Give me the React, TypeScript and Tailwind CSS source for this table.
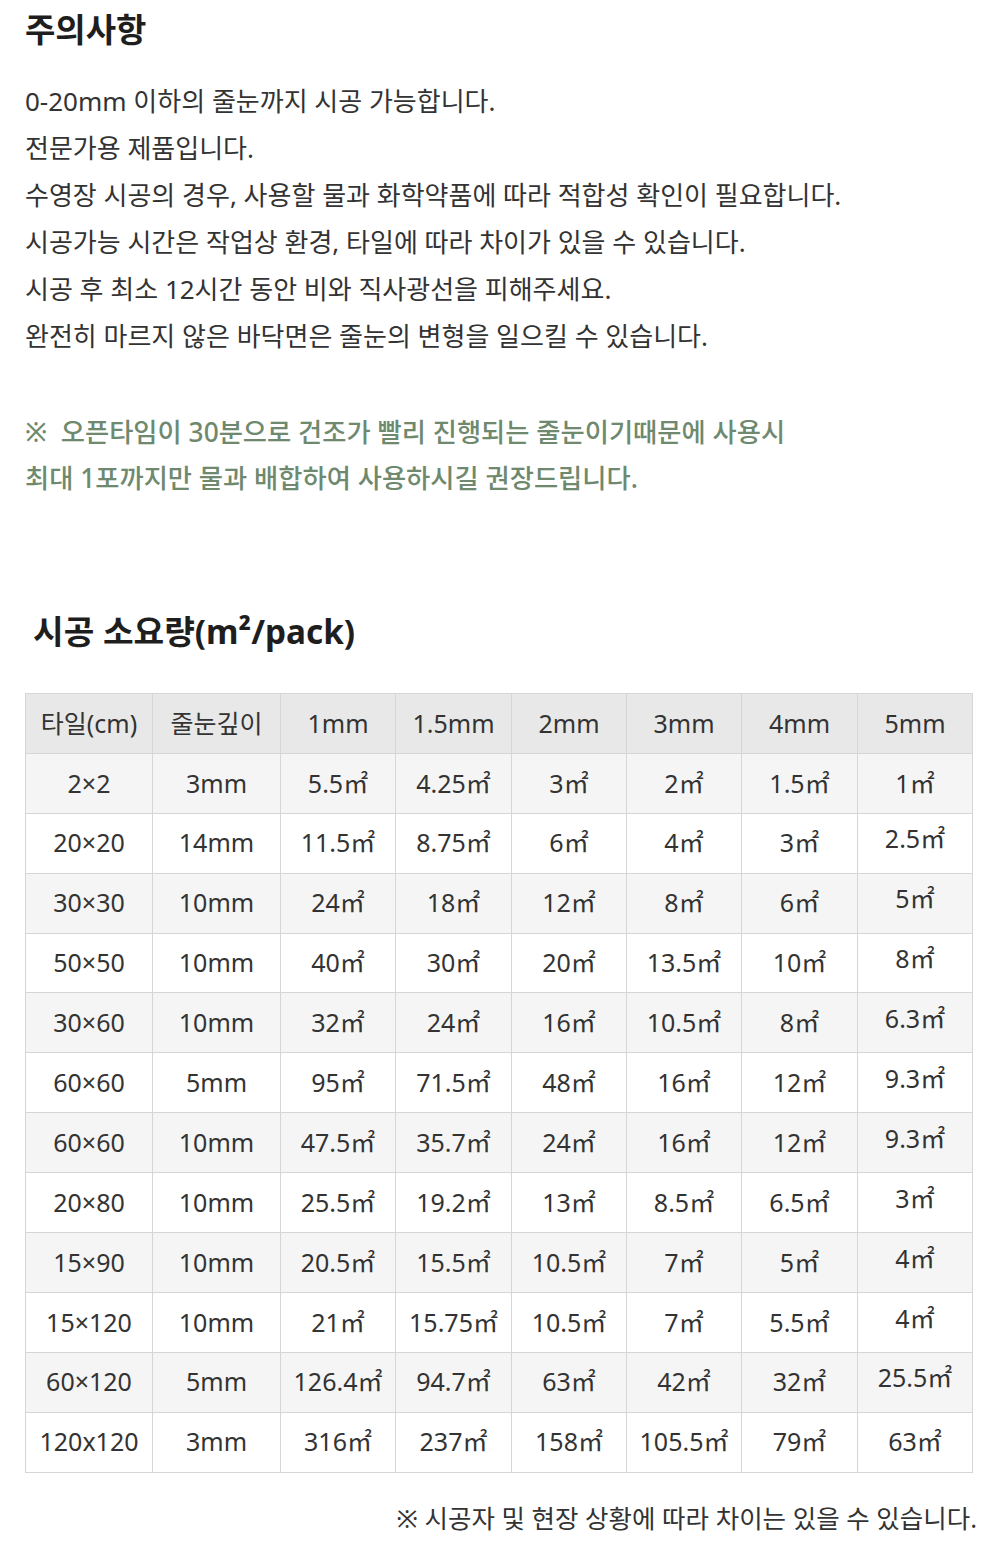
import React from "react";

const font = { fontFamily: '"Noto Sans", "Noto Sans CJK KR", sans-serif' };

const header = ["타일(cm)", "줄눈깊이", "1mm", "1.5mm", "2mm", "3mm", "4mm", "5mm"];
const rows: string[][] = [
  ["2×2", "3mm", "5.5㎡", "4.25㎡", "3㎡", "2㎡", "1.5㎡", "1㎡"],
  ["20×20", "14mm", "11.5㎡", "8.75㎡", "6㎡", "4㎡", "3㎡", "2.5㎡"],
  ["30×30", "10mm", "24㎡", "18㎡", "12㎡", "8㎡", "6㎡", "5㎡"],
  ["50×50", "10mm", "40㎡", "30㎡", "20㎡", "13.5㎡", "10㎡", "8㎡"],
  ["30×60", "10mm", "32㎡", "24㎡", "16㎡", "10.5㎡", "8㎡", "6.3㎡"],
  ["60×60", "5mm", "95㎡", "71.5㎡", "48㎡", "16㎡", "12㎡", "9.3㎡"],
  ["60×60", "10mm", "47.5㎡", "35.7㎡", "24㎡", "16㎡", "12㎡", "9.3㎡"],
  ["20×80", "10mm", "25.5㎡", "19.2㎡", "13㎡", "8.5㎡", "6.5㎡", "3㎡"],
  ["15×90", "10mm", "20.5㎡", "15.5㎡", "10.5㎡", "7㎡", "5㎡", "4㎡"],
  ["15×120", "10mm", "21㎡", "15.75㎡", "10.5㎡", "7㎡", "5.5㎡", "4㎡"],
  ["60×120", "5mm", "126.4㎡", "94.7㎡", "63㎡", "42㎡", "32㎡", "25.5㎡"],
  ["120x120", "3mm", "316㎡", "237㎡", "158㎡", "105.5㎡", "79㎡", "63㎡"],
];
const widths = [127, 128, 115, 116, 115, 115, 116, 115];

export default function App() {
  return (
    <div className="w-[1000px] h-[1547px] bg-white text-[#333]" style={font}>
      <div className="pl-[25px] pt-[10px]">
        <h1 className="text-[33px] leading-[40px] font-bold text-[#1e1e1e]">주의사항</h1>
        <div className="mt-[28px] text-[26px] leading-[47px]">
          <p>0-20mm 이하의 줄눈까지 시공 가능합니다.</p>
          <p>전문가용 제품입니다.</p>
          <p>수영장 시공의 경우, 사용할 물과 화학약품에 따라 적합성 확인이 필요합니다.</p>
          <p>시공가능 시간은 작업상 환경, 타일에 따라 차이가 있을 수 있습니다.</p>
          <p>시공 후 최소 12시간 동안 비와 직사광선을 피해주세요.</p>
          <p>완전히 마르지 않은 바닥면은 줄눈의 변형을 일으킬 수 있습니다.</p>
        </div>
        <div className="mt-[49px] text-[26.3px] leading-[46px] font-medium text-[#6e896e]">
          <p>※&nbsp; 오픈타임이 30분으로 건조가 빨리 진행되는 줄눈이기때문에 사용시</p>
          <p>최대 1포까지만 물과 배합하여 사용하시길 권장드립니다.</p>
        </div>
        <h2 className="mt-[110px] pl-[8px] text-[33.3px] leading-[40px] font-bold text-[#1e1e1e]">
          시공 소요량(m²/pack)
        </h2>
        <table className="mt-[42px] border-collapse text-[25px] text-[#333] table-fixed w-[947px]">
          <colgroup>
            {widths.map((w, i) => (
              <col key={i} style={{ width: w }} />
            ))}
          </colgroup>
          <thead>
            <tr className="bg-[#e8e8e8] h-[59.9px]">
              {header.map((h, i) => (
                <th key={i} className="border border-[#d6d6d6] font-normal text-center p-0 whitespace-nowrap">
                  {h}
                </th>
              ))}
            </tr>
          </thead>
          <tbody>
            {rows.map((r, ri) => (
              <tr key={ri} className={(ri % 2 === 0 ? "bg-[#f5f5f5]" : "bg-white") + " h-[59.9px]"}>
                {r.map((c, ci) => (
                  <td
                    key={ci}
                    className={
                      "border border-[#d6d6d6] text-center p-0 whitespace-nowrap" +
                      (ci === 7 && ri >= 1 && ri <= 10 ? " pb-[8px]" : "")
                    }
                  >
                    {c}
                  </td>
                ))}
              </tr>
            ))}
          </tbody>
        </table>
      </div>
      <p className="mt-[27px] pr-[23px] text-right text-[25.5px] leading-[36px]">
        ※ 시공자 및 현장 상황에 따라 차이는 있을 수 있습니다.
      </p>
    </div>
  );
}
